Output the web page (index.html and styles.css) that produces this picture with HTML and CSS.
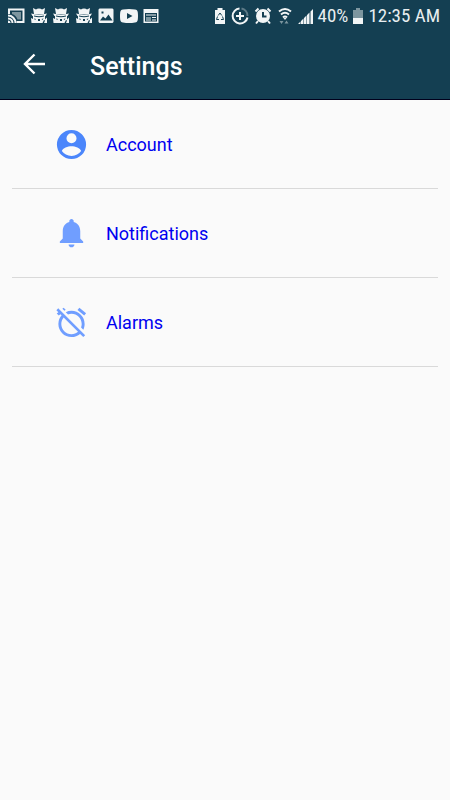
FILE: index.html
```html
<!DOCTYPE html>
<html lang="en">
<head>
<meta charset="utf-8">
<meta name="viewport" content="width=device-width, initial-scale=1">
<title>Settings</title>
<link rel="stylesheet" href="styles.css">
</head>
<body>
<svg class="defs" aria-hidden="true">
  <symbol id="knight" viewBox="0 0 18 18">
    <path d="M3 1l3 1.500q1-1 3-1T12 2.500L15 1l-1 6H4z"/>
    <path d="M1 6.500q8 2 16 0L15.500 9q-6.500 1-13 0z"/>
    <path d="M3 9h12v7H3zM1 11l2 1v4H1.500zM17 10.500l-2 2V16h2z"/>
    <path class="cut" d="M4 8.500q5 1.500 10 0v1q-5 1.500-10 0zM8 12h2v2H8zM4 11.500l2 .5-1 1zM13.500 11.500l-2 .5 1 1zM12.500 16l1.500-3 1 .5-1 2.500z"/>
  </symbol>
</svg>
<header>
  <div class="status">
    <div class="group notices">
      <svg class="icon" viewBox="0 0 18 18"><path d="M1 1.500h16.500v14.500H9.500v-2h6V3.500H3V7H1z"/><path class="line" d="M1 8.500a7.500 7.500 0 0 1 7.500 7.500M1 11.500a4.500 4.500 0 0 1 4.500 4.500"/><path d="M1 13.500A2.500 2.500 0 0 1 3.500 16H1z"/><path class="faint" d="M5 5h9v7.500h-3.500Q9 8 5 7z"/></svg>
      <svg class="icon"><use href="#knight"/></svg>
      <svg class="icon"><use href="#knight"/></svg>
      <svg class="icon"><use href="#knight"/></svg>
      <svg class="icon" viewBox="0 0 18 18"><path fill-rule="evenodd" d="M2.500 1.500h13l1 1v12.500l-1 1h-13l-1-1V2.500zM3 13.500h12.500l-4-6-3 4-2.500-2zM4.500 4.500v2h2v-2z"/></svg>
      <svg class="icon" viewBox="0 0 18 18"><path fill-rule="evenodd" d="M3 2.500q6-1 12 0 2.500 0 2.800 3 .4 3.500 0 7-.3 3-2.800 3-6 1-12 0-2.500 0-2.800-3-.4-3.500 0-7 .3-3 2.800-3zM7 6v6L12.500 9z"/></svg>
      <svg class="icon" viewBox="0 0 18 18"><path fill-rule="evenodd" d="M1.500 2h15v14h-15zM3 6v8.500h12V6z"/><path d="M4 7.500h10v1H4zM10 10h4v1h-4zM10 12.500h4v1h-4z"/><path class="faint" d="M4 10h5v4H4z"/></svg>
    </div>
    <div class="group system">
      <div class="group indicators">
        <svg class="icon narrow" viewBox="0 0 12 18"><path d="M3.500 1h5v2H11v14H1V3h2.500z"/><path class="mark thin" d="M4.200 8.500L6 6l1.800 2.500M3.500 9.500L2.500 12.500H5M8.500 9.500l1 3H7"/></svg>
        <svg class="icon" viewBox="0 0 18 18"><path class="ring" d="M8.500 1.500a7.500 7.500 0 1 0 8 9"/><path class="ring faint-ring" d="M10.500 1.500a7.500 7.500 0 0 1 6 7.500"/><path d="M8 5h2v3h3v2h-3v3H8v-3H5V8h3z"/></svg>
        <svg class="icon" viewBox="0 0 18 18"><circle cx="9" cy="9" r="7"/><path class="ring" d="M1.500 4.500l3-3M13.500 1.500l3 3M4 14l-2 2.500M14 14l2 2.500"/><path class="mark" d="M9 5V9.500h3.500"/></svg>
        <svg class="icon medium" viewBox="0 0 16 18"><path class="line" d="M2 4.500q6-5 12 0M4 7.500q4-3.500 8 0M6 10.500q2-2 4 0"/><path d="M6.500 11h3L8 13z"/><path class="faint" d="M2.500 14h4l-2 3zM7.500 16.500l2-3 2 3z"/></svg>
        <svg class="icon medium" viewBox="0 0 16 18"><path d="M0 17l2.500-2.500V17zM3 17v-3l2.500-2.500V17zM6 17v-6l2.500-2.500V17zM9 17V8l2.500-2.500V17zM12.500 17V4.500L15 2v15z"/></svg>
      </div>
      <span class="percent">40%</span>
      <svg class="icon narrow" viewBox="0 0 12 18"><path class="faint" d="M4 1h4v2h3v9H1V3h3z"/><path d="M1 11h10v6H1z"/></svg>
      <time>12:35 AM</time>
    </div>
  </div>
  <div class="toolbar">
    <button class="back" type="button" aria-label="Back"><svg viewBox="0 0 24 24"><path d="M12.500 2.500L3 12l9.500 9.500M3 12h20"/></svg></button>
    <h1>Settings</h1>
  </div>
</header>
<main>
  <nav aria-label="Settings">
    <a class="row" href="#account"><svg class="account" viewBox="0 0 24 24"><path d="M12 2a10 10 0 1 0 0 20 10 10 0 0 0 0-20zm0 2.300a3.400 3.400 0 1 1 0 6.900 3.400 3.400 0 0 1 0-6.900zm0 15.500c-2.800 0-5.200-1.300-6.600-3.300.5-2 4.100-3.300 6.600-3.300s6.100 1.300 6.600 3.300a8 8 0 0 1-6.600 3.300z"/></svg>Account</a>
    <a class="row" href="#notifications"><svg viewBox="0 0 24 24"><path d="M12 21.500c1.100 0 2-.9 2-2h-4c0 1.100.9 2 2 2zm6-6v-5c0-3.070-1.640-5.640-4.500-6.320V3.500c0-.83-.67-1.500-1.500-1.500s-1.500.67-1.500 1.500v.68C7.630 4.860 6 7.420 6 10.500v5l-2 2v1h16v-1l-2-2z"/></svg>Notifications</a>
    <a class="row" href="#alarms"><svg viewBox="0 0 24 24"><path d="M12 6c3.870 0 7 3.130 7 7 0 .84-.16 1.650-.43 2.400l1.520 1.520c.58-1.190.91-2.510.91-3.920a9 9 0 0 0-9-9c-1.410 0-2.730.33-3.920.91L9.600 6.430C10.350 6.160 11.160 6 12 6zm10-.28l-4.600-3.860-1.290 1.530 4.600 3.860L22 5.720zM2.920 2.290L1.650 3.570 2.980 4.900l-1.110.93 1.420 1.420 1.110-.94.8.8A8.964 8.964 0 0 0 3 13c0 4.970 4.020 9 9 9 2.250 0 4.310-.83 5.890-2.200l2.200 2.200 1.270-1.270L3.890 3.270l-.97-.98zm13.550 16.100C15.260 19.390 13.700 20 12 20c-3.870 0-7-3.130-7-7 0-1.700.61-3.260 1.610-4.470l9.860 9.860zM8.020 3.280L6.600 1.860l-.86.71 1.420 1.420.86-.71z"/></svg>Alarms</a>
  </nav>
</main>
</body>
</html>
```
FILE: styles.css
```css
* {
  box-sizing: border-box;
}

body {
  margin: 0;
  background: #fafafa;
  font-family: Roboto, sans-serif;
}

.defs {
  position: absolute;
  width: 0;
  height: 0;
}

header {
  background: #143f52;
  color: #fff;
  border-bottom: 1px solid #00001c;
}

.status {
  display: flex;
  justify-content: space-between;
  align-items: center;
  height: 31px;
  padding: 0 10px 0 7px;
  font-family: "Roboto Condensed", Roboto, sans-serif;
  font-size: 19px;
  line-height: 31px;
  color: #e8eef0;
}

.group {
  display: flex;
  align-items: center;
  white-space: nowrap;
}

.notices {
  justify-content: space-between;
  width: 153px;
}

.system {
  gap: 4px;
}

.indicators {
  gap: 5px;
}

.icon {
  width: 18px;
  height: 18px;
  fill: #f2f5f6;
}

.medium {
  width: 16px;
}

.narrow {
  width: 12px;
}

.cut {
  fill: #143f52;
}

.faint {
  fill: #7d969f;
}

.line {
  fill: none;
  stroke: #f2f5f6;
  stroke-width: 2;
}

.mark {
  fill: none;
  stroke: #143f52;
  stroke-width: 2;
}

.thin {
  stroke-width: 1;
}

.ring {
  fill: none;
  stroke: #f2f5f6;
  stroke-width: 2;
}

.faint-ring {
  stroke: #5d7a87;
}

.toolbar {
  display: flex;
  align-items: flex-start;
  gap: 44px;
  height: 68px;
  padding: 20px 22px 0;
}

.back {
  display: flex;
  margin-top: 1px;
  width: 24px;
  height: 24px;
  padding: 0;
  border: 0;
  background: none;
}

.back svg {
  width: 24px;
  height: 24px;
  fill: none;
  stroke: #fff;
  stroke-width: 2.400;
}

h1 {
  margin: 0;
  font-size: 25px;
  font-weight: 500;
  line-height: 32px;
}

main {
  padding: 0 12px;
}

.row {
  display: flex;
  align-items: center;
  gap: 17px;
  height: 89px;
  padding-left: 42px;
  border-bottom: 1px solid #d9d9d9;
  color: #0000f0;
  font-size: 18px;
  line-height: 25px;
  text-decoration: none;
}

.row svg {
  width: 35px;
  height: 35px;
  fill: #709eff;
}

.row .account {
  fill: #4b86fb;
}
```
